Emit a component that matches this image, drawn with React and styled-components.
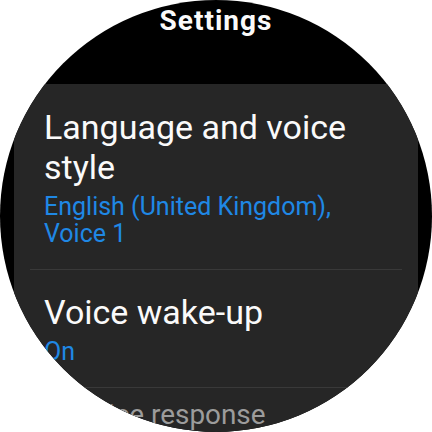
import React from "react";
import styled, { createGlobalStyle } from "styled-components";

const GlobalStyle = createGlobalStyle`
  html, body {
    margin: 0;
    padding: 0;
    background: #ffffff;
  }
  body {
    font-family: Roboto, "Noto Sans", sans-serif;
  }
`;

// Round watch face, everything outside the circle is hidden
const Watch = styled.div`
  width: 432px;
  height: 432px;
  border-radius: 50%;
  overflow: hidden;
  background: #000;
  display: flex;
  flex-direction: column;
`;

const Header = styled.h1`
  margin: 0;
  height: 84px;
  flex-shrink: 0;
  box-sizing: border-box;
  padding-top: 5px;
  text-align: center;
  color: #fafafa;
  font-size: 28px;
  font-weight: 700;
  line-height: 32px;
  letter-spacing: 1px;
`;

const Card = styled.div`
  flex: 1;
  margin: 0 14px;
  background: #262626;
  border-radius: 26px 26px 0 0;
`;

// One settings row; rows near the bottom edge shrink and dim
const Item = styled.div`
  padding: ${({ $top }) => $top}px 40px 22px 30px;
  transform: scale(${({ $scale }) => $scale || 1});
  transform-origin: 50% 0;
  color: ${({ $dim }) => ($dim ? "#9c9c9c" : "#fafafa")};
`;

const ItemTitle = styled.div`
  font-size: 34px;
  line-height: 40px;
  font-weight: 400;
`;

const ItemValue = styled.div`
  margin-top: 6px;
  font-size: 25px;
  line-height: 27px;
  color: #1f88e5;
`;

const Divider = styled.div`
  height: 1px;
  margin: 0 16px;
  background: #393939;
`;

const App = () => {
  return (
    <>
      <GlobalStyle />
      <Watch>
        <Header>Settings</Header>
        <Card>
          <Item $top={23}>
            <ItemTitle>Language and voice style</ItemTitle>
            <ItemValue>English (United Kingdom), Voice 1</ItemValue>
          </Item>
          <Divider />
          <Item $top={22}>
            <ItemTitle>Voice wake-up</ItemTitle>
            <ItemValue>On</ItemValue>
          </Item>
          <Divider />
          <Item $top={12} $scale={0.82} $dim>
            <ItemTitle>Voice response</ItemTitle>
          </Item>
        </Card>
      </Watch>
    </>
  );
};

export default App;
